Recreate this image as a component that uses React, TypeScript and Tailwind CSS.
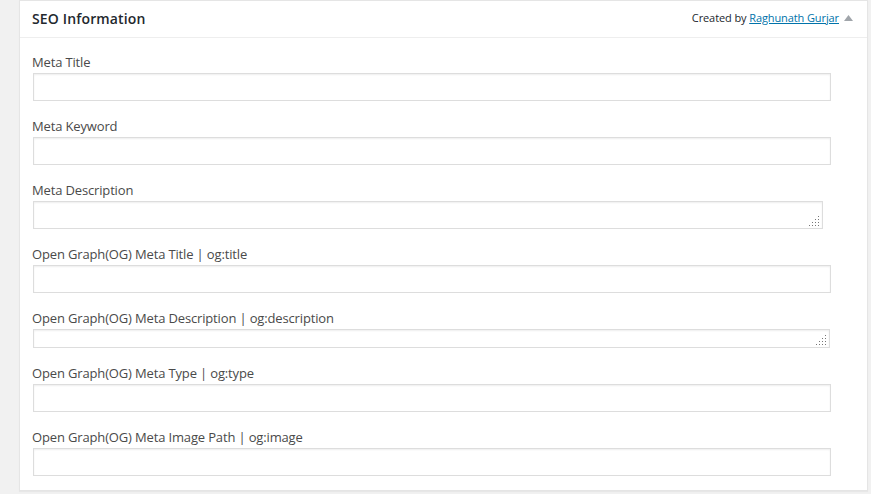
import React from 'react'

type Field = { label: string; kind: 'input' | 'textarea'; w: string; h: string }

const fields: Field[] = [
  { label: 'Meta Title', kind: 'input', w: 'w-[798px]', h: 'h-[28px]' },
  { label: 'Meta Keyword', kind: 'input', w: 'w-[798px]', h: 'h-[28px]' },
  { label: 'Meta Description', kind: 'textarea', w: 'w-[790px]', h: 'h-[28px]' },
  { label: 'Open Graph(OG) Meta Title | og:title', kind: 'input', w: 'w-[798px]', h: 'h-[28px]' },
  { label: 'Open Graph(OG) Meta Description | og:description', kind: 'textarea', w: 'w-[797px]', h: 'h-[19px]' },
  { label: 'Open Graph(OG) Meta Type | og:type', kind: 'input', w: 'w-[798px]', h: 'h-[28px]' },
  { label: 'Open Graph(OG) Meta Image Path | og:image', kind: 'input', w: 'w-[798px]', h: 'h-[28px]' },
]

function ResizeDots() {
  const dots = [
    [9, 0],
    [6, 3], [9, 3],
    [3, 6], [6, 6], [9, 6],
    [0, 9], [3, 9], [6, 9], [9, 9],
  ]
  return (
    <svg className="pointer-events-none absolute bottom-[3px] right-[4px]" width="10" height="10" viewBox="0 0 10 10">
      {dots.map(([x, y]) => (
        <rect key={`${x}-${y}`} x={x} y={y} width="1" height="1" fill="#777" />
      ))}
    </svg>
  )
}

export default function App() {
  return (
    <div className="min-h-[494px] bg-[#f1f1f1] pl-[19px] font-['Open_Sans',sans-serif]">
      <div className="w-[849px] border border-[#e5e5e5] bg-white shadow-[0_1px_1px_rgba(0,0,0,0.04)]">
        {/* Header */}
        <div className="flex h-[37px] items-center justify-between border-b border-[#eee] pb-[2px] pl-3 pr-[14px]">
          <h2 className="text-[14px] font-semibold tracking-[0.15px] text-[#23282d]">SEO Information</h2>
          <div className="flex items-center gap-[5px]">
            <span className="text-[11px] tracking-[-0.1px] text-[#23282d]">
              Created by <a href="#" className="text-[#0073aa] underline">Raghunath Gurjar</a>
            </span>
            <svg width="9" height="6" viewBox="0 0 9 6">
              <path d="M4.5 0 L9 6 L0 6 Z" fill="#a0a5aa" />
            </svg>
          </div>
        </div>

        {/* Fields */}
        <div className="flex flex-col gap-4 pb-[14px] pl-[13px] pt-[15px]">
          {fields.map((f) => (
            <div key={f.label} className="flex flex-col gap-px">
              <label className="-ml-px h-[19px] text-[13px] leading-[19px] tracking-[-0.15px] text-[#4a4a4a]">{f.label}</label>
              {f.kind === 'input' ? (
                <input
                  type="text"
                  className={`${f.w} ${f.h} border border-[#ddd] bg-white shadow-[inset_0_1px_2px_rgba(0,0,0,0.07)] outline-none`}
                />
              ) : (
                <div className={`relative ${f.w} ${f.h}`}>
                  <textarea
                    className="block h-full w-full resize-none border border-[#ddd] bg-white shadow-[inset_0_1px_2px_rgba(0,0,0,0.07)] outline-none"
                  />
                  <ResizeDots />
                </div>
              )}
            </div>
          ))}
        </div>
      </div>
    </div>
  )
}
